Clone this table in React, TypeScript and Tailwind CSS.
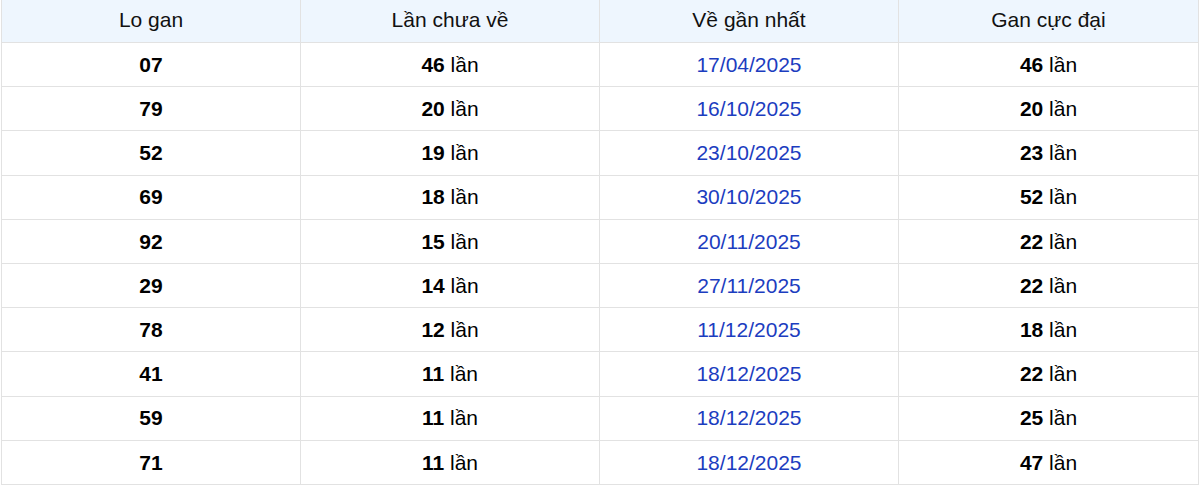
import React from "react";

const rows = [
  ["07", "46", "17/04/2025", "46"],
  ["79", "20", "16/10/2025", "20"],
  ["52", "19", "23/10/2025", "23"],
  ["69", "18", "30/10/2025", "52"],
  ["92", "15", "20/11/2025", "22"],
  ["29", "14", "27/11/2025", "22"],
  ["78", "12", "11/12/2025", "18"],
  ["41", "11", "18/12/2025", "22"],
  ["59", "11", "18/12/2025", "25"],
  ["71", "11", "18/12/2025", "47"],
];

export default function App() {
  return (
    <div className="w-[1200px] h-[485px] overflow-hidden bg-white px-px" style={{ fontFamily: '"Liberation Sans", Arial, sans-serif' }}>
      <div className="border-x border-[#e2e2e2] text-[21px] text-[#111]">
        <div className="grid grid-cols-4 h-[43px] bg-[#eef6fe] border-b border-[#e2e2e2]">
          {["Lo gan", "Lần chưa về", "Về gần nhất", "Gan cực đại"].map((h, i) => (
            <div key={h} className={`flex items-center justify-center pb-[2px] ${i < 3 ? "border-r border-[#e2e2e2]" : ""}`}>
              {h}
            </div>
          ))}
        </div>
        {rows.map((r, idx) => (
          <div key={idx} className="grid grid-cols-4 h-[44.2px] border-b border-[#e2e2e2]">
            <div className="flex items-center justify-center border-r border-[#e2e2e2] font-bold text-black">{r[0]}</div>
            <div className="flex items-center justify-center border-r border-[#e2e2e2] text-black">
              <span className="font-bold">{r[1]}</span>&nbsp;lần
            </div>
            <div className="flex items-center justify-center border-r border-[#e2e2e2] text-[#1c3dbf]">{r[2]}</div>
            <div className="flex items-center justify-center text-black">
              <span className="font-bold">{r[3]}</span>&nbsp;lần
            </div>
          </div>
        ))}
      </div>
    </div>
  );
}
